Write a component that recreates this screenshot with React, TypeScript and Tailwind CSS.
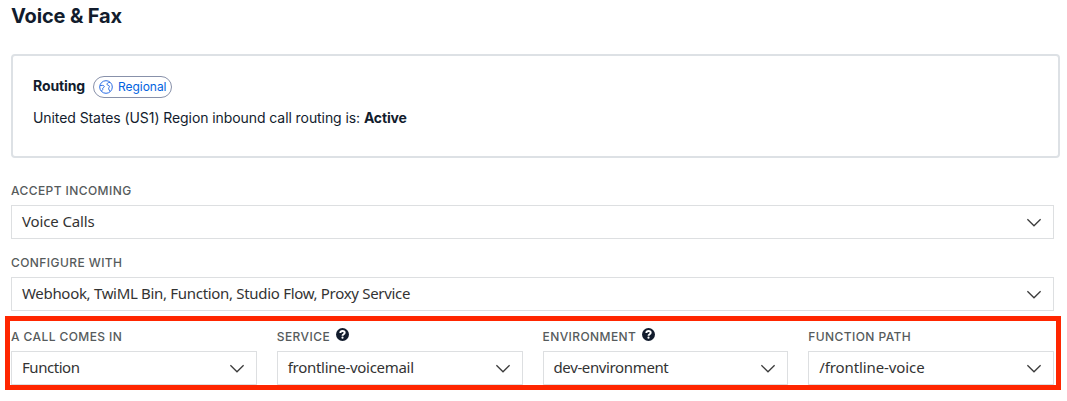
import React from "react";

function Chevron() {
  return (
    <svg className="h-[9px] w-4 shrink-0" viewBox="0 0 16 9" fill="none" stroke="#3c3c3c" strokeWidth="1.3">
      <path d="M1.4 1.2 L8 7.8 L14.6 1.2" />
    </svg>
  );
}

function HelpIcon() {
  return (
    <svg className="-mt-[5px] h-[13px] w-[13px] shrink-0" viewBox="0 0 13 13">
      <circle cx="6.5" cy="6.5" r="6.5" fill="#121c2d" />
      <path
        d="M4.3 5 C4.4 3.5 5.3 3 6.5 3 C7.8 3 8.7 3.7 8.7 4.8 C8.7 6.3 6.5 6.1 6.5 7.7"
        fill="none"
        stroke="#fff"
        strokeWidth="1.9"
      />
      <circle cx="6.5" cy="9.7" r="1.1" fill="#fff" />
    </svg>
  );
}

function GlobeIcon() {
  return (
    <svg className="h-[14px] w-[14px] shrink-0" viewBox="0 0 14 14" fill="none" stroke="#2b6de5" strokeWidth="1">
      <circle cx="7" cy="7" r="6.3" />
      <path d="M1 5.4 H3.6 C5.2 5.4 5.6 6.4 5 7.2 C4.2 8 3.4 7.9 3.7 8.8 C4 9.8 3.2 10.6 2.4 11" />
      <path d="M11 2.4 C9 2.4 8 3.2 8.1 4.4 C8.2 5.7 10.2 5 10.4 6.2 C10.6 7.3 9.3 7.9 9.7 9 C10 10 10.6 10.2 10.8 11.4" />
    </svg>
  );
}

type FieldProps = { label: string; value: string; tracking: string; help?: boolean };

function Field({ label, value, tracking, help }: FieldProps) {
  return (
    <div className="min-w-0">
      <div className="flex h-5 items-center gap-[6px] text-[12px] leading-5 font-medium tracking-[0.42px] whitespace-nowrap text-[#565b5c]">
        <span>{label}</span>
        {help && <HelpIcon />}
      </div>
      <div className="mt-1 flex h-[34px] items-center justify-between border border-[#dddfe1] bg-white pr-[11px] pl-[10px]">
        <span
          className={`pb-[2px] font-['Noto_Sans','Open_Sans',sans-serif] text-[15px] leading-5 whitespace-nowrap text-[#333] ${tracking}`}
        >
          {value}
        </span>
        <Chevron />
      </div>
    </div>
  );
}

export default function App() {
  return (
    <main className="relative h-[401px] w-[1067px] overflow-hidden bg-white pl-[11px] font-['Inter',sans-serif] text-[#121c2d]">
      <h1 className="pt-[2px] text-[20px] leading-7 font-bold tracking-[-0.15px]">Voice &amp; Fax</h1>
      <section className="mt-6 h-[104px] w-[1049px] rounded border-2 border-[#dde1e5] px-5 pt-5">
        <div className="flex h-[22px] items-center gap-2">
          <h2 className="pb-[2px] text-[14px] leading-5 font-bold tracking-[-0.1px]">Routing</h2>
          <span className="flex h-[22px] items-center gap-[5px] rounded-full border border-[#8891aa] px-[5px] text-[12px] leading-5 tracking-[-0.05px] text-[#0263e0]">
            <GlobeIcon />
            Regional
          </span>
        </div>
        <p className="mt-[10px] text-[14px] leading-5 tracking-[-0.08px]">
          United States (US1) Region inbound call routing is: <b className="font-bold tracking-[-0.15px]">Active</b>
        </p>
      </section>
      <form className="mt-[23px] w-[1043px]">
        <Field label="ACCEPT INCOMING" value="Voice Calls" tracking="tracking-[-0.13px]" />
        <div className="mt-[14px]">
          <Field
            label="CONFIGURE WITH"
            value="Webhook, TwiML Bin, Function, Studio Flow, Proxy Service"
            tracking="tracking-[-0.31px]"
          />
        </div>
        <div className="mt-4 grid grid-cols-4 gap-5">
          <Field label="A CALL COMES IN" value="Function" tracking="tracking-[-0.45px]" />
          <Field label="SERVICE" value="frontline-voicemail" tracking="tracking-[-0.29px]" help />
          <Field label="ENVIRONMENT" value="dev-environment" tracking="tracking-[-0.37px]" help />
          <Field label="FUNCTION PATH" value="/frontline-voice" tracking="tracking-[-0.1px]" />
        </div>
      </form>
      <div className="pointer-events-none absolute top-[316px] left-[5px] h-[74px] w-[1056px] border-[5px] border-[#ff2600]" />
    </main>
  );
}
